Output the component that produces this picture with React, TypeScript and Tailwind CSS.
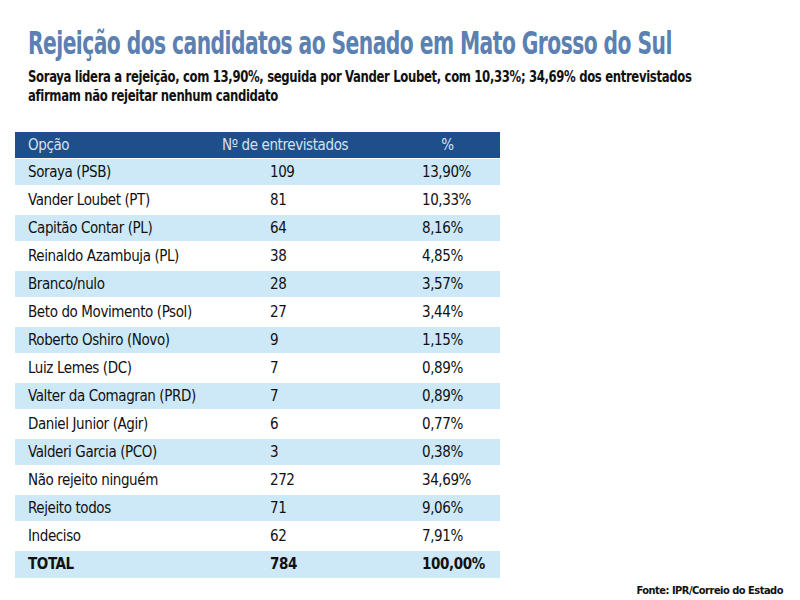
const rows: [string, string, string][] = [
  ['Soraya (PSB)', '109', '13,90%'],
  ['Vander Loubet (PT)', '81', '10,33%'],
  ['Capitão Contar (PL)', '64', '8,16%'],
  ['Reinaldo Azambuja (PL)', '38', '4,85%'],
  ['Branco/nulo', '28', '3,57%'],
  ['Beto do Movimento (Psol)', '27', '3,44%'],
  ['Roberto Oshiro (Novo)', '9', '1,15%'],
  ['Luiz Lemes (DC)', '7', '0,89%'],
  ['Valter da Comagran (PRD)', '7', '0,89%'],
  ['Daniel Junior (Agir)', '6', '0,77%'],
  ['Valderi Garcia (PCO)', '3', '0,38%'],
  ['Não rejeito ninguém', '272', '34,69%'],
  ['Rejeito todos', '71', '9,06%'],
  ['Indeciso', '62', '7,91%'],
];

const font = { fontFamily: '"DejaVu Sans Condensed", "Liberation Sans", sans-serif' };

export default function App() {
  return (
    <div className="w-[800px] h-[600px] bg-white overflow-hidden" style={font}>
      {/* Heading */}
      <div className="pl-[28px] pt-[26px]">
        <h1 className="whitespace-nowrap origin-left scale-x-[0.705] text-[32px] leading-[34px] font-bold text-[#5b80b2] tracking-[-0.8px]">
          Rejeição dos candidatos ao Senado em Mato Grosso do Sul
        </h1>
        <p className="mt-[8px] whitespace-nowrap origin-left scale-x-[0.865] text-[15px] leading-[19px] font-bold text-[#111] tracking-[-0.4px]">
          Soraya lidera a rejeição, com 13,90%, seguida por Vander Loubet, com 10,33%; 34,69% dos entrevistados
          <br />
          afirmam não rejeitar nenhum candidato
        </p>
      </div>

      {/* Table */}
      <div className="ml-[15px] mt-[26px] w-[485px] text-[15px] text-[#111] tracking-[-0.4px]">
        <div className="grid grid-cols-[207px_155px_1fr] h-[26px] items-center bg-[#1f4f8b] text-[#d3e1f1]">
          <span className="pl-[13px]">Opção</span>
          <span>Nº de entrevistados</span>
          <span className="text-center pl-[18px]">%</span>
        </div>
        {rows.map(([name, n, pct], i) => (
          <div
            key={name}
            className={`grid grid-cols-[255px_152px_1fr] h-[28px] items-center ${i % 2 === 0 ? 'bg-[#cde8f7] border-y border-white' : 'bg-white'}`}
          >
            <span className="pl-[13px]">{name}</span>
            <span>{n}</span>
            <span>{pct}</span>
          </div>
        ))}
        <div className="grid grid-cols-[255px_152px_1fr] h-[28px] items-center bg-[#cde8f7] border-t border-white font-bold">
          <span className="pl-[13px]">TOTAL</span>
          <span>784</span>
          <span>100,00%</span>
        </div>
      </div>

      <div className="flex justify-end pr-[17px] mt-[7px]">
        <span className="text-[11px] leading-[12px] font-bold text-[#111] tracking-[-0.5px]">Fonte: IPR/Correio do Estado</span>
      </div>
    </div>
  );
}
